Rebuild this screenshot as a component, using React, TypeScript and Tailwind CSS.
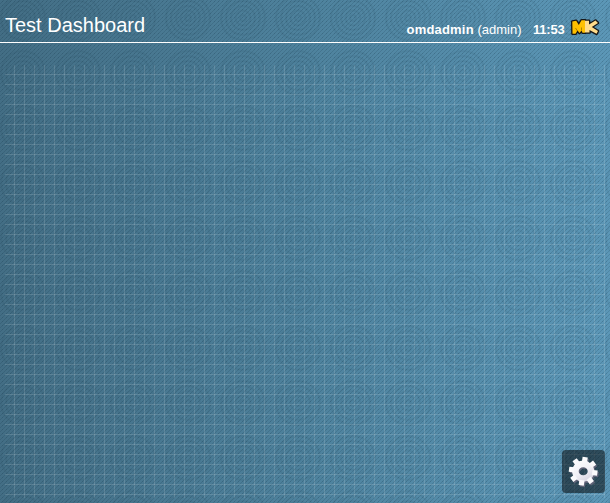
function Backdrop() {
  return (
    <svg className="absolute inset-0 -z-10" width="610" height="503" aria-hidden="true">
      <defs>
        <pattern id="hatch" width="4" height="4" patternUnits="userSpaceOnUse">
          <path d="M0 3h1v1H0zM1 2h1v1H1zM2 1h1v1H2zM3 0h1v1H3z" fill="#0c2c3d" opacity=".16" />
          <path d="M2 1h1v1H2z" fill="#0c2c3d" opacity=".12" />
        </pattern>
        <pattern id="rings" x="-4.500" y="-9.500" width="55" height="55" patternUnits="userSpaceOnUse">
          <g fill="none" stroke="#123546" strokeWidth="1.500" opacity=".13">
            <circle cx="27.500" cy="27.500" r="3" />
            <circle cx="27.500" cy="27.500" r="7.500" />
            <circle cx="27.500" cy="27.500" r="12" />
            <circle cx="27.500" cy="27.500" r="17" />
            <circle cx="27.500" cy="27.500" r="22" />
          </g>
        </pattern>
      </defs>
      <rect width="610" height="503" fill="url(#hatch)" />
      <rect width="610" height="503" fill="url(#rings)" />
    </svg>
  );
}

function Logo() {
  return (
    <svg className="ml-1.5 mt-[18px]" width="30" height="18" viewBox="0 0 30 18" strokeLinejoin="round" aria-label="MK">
      <g stroke="#171717" strokeWidth="2.600">
        <path d="M2.300 3.500L6.200 2.800L8.800 7L11.500 2.300H15V14.800H12.500L11.500 12.500L9.500 15L7.500 12.500L5.500 15.800H2.500Z" />
        <path d="M15 2.800H19V6.500L25.500 2.500L28 5L21.800 9L28 13L26.500 15.800L19.500 12V14.500H15Z" />
      </g>
      <path d="M2.300 3.500L6.200 2.800L8.800 7L11.500 2.300H15V14.800H12.500L11.500 12.500L9.500 15L7.500 12.500L5.500 15.800H2.500Z" fill="#ffc000" />
      <path d="M15 2.800H19V6.500L25.500 2.500L28 5L21.800 9L28 13L26.500 15.800L19.500 12V14.500H15Z" fill="#ffdc8c" />
      <path d="M5.500 10L7.500 13M11.500 9.500V12.500" stroke="#9b7100" strokeWidth=".8" />
    </svg>
  );
}

const TEETH = [0, 45, 90, 135, 180, 225, 270, 315];

function Gear() {
  return (
    <svg width="33" height="33" viewBox="-16.500 -16.500 33 33" aria-hidden="true">
      <defs>
        <linearGradient id="metal" gradientUnits="userSpaceOnUse" x1="-8" y1="-14" x2="8" y2="14">
          <stop offset="0" stopColor="#ffffff" />
          <stop offset=".5" stopColor="#f1f0f6" />
          <stop offset="1" stopColor="#c9c7d5" />
        </linearGradient>
        <g id="gear-body" fill="none" strokeLinejoin="round">
          <ellipse rx="7.800" ry="7.300" strokeWidth="6.600" />
          {TEETH.map((angle) => (
            <path key={angle} d="M0-9V-14.300" strokeWidth="5.200" transform={`rotate(${angle + 8})`} />
          ))}
        </g>
      </defs>
      <use href="#gear-body" x=".8" y="1.200" stroke="#716d83" opacity=".75" />
      <use href="#gear-body" x="-.3" y="-.3" stroke="url(#metal)" />
    </svg>
  );
}

export default function App() {
  return (
    <div className="relative isolate flex h-[503px] w-[610px] flex-col overflow-hidden bg-linear-to-r from-[#436e85] via-[#4e829d] to-[#5c97b7] font-['Liberation_Sans',Arial,sans-serif] text-white">
      <Backdrop />
      <header className="flex h-[43px] shrink-0 items-start border-b border-white pl-[5px] pr-2.5">
        <h1 className="mt-[13px] text-[20px] leading-6">Test Dashboard</h1>
        <div className="ml-auto mt-[22px] flex text-[13px] leading-4">
          <b className="w-[71px] tracking-[0.2px]">omdadmin</b>
          <span className="w-[55.500px]">(admin)</span>
          <b className="w-[31px] tracking-[-0.2px]">11:53</b>
        </div>
        <Logo />
      </header>
      <main className="mx-[5px] mt-[22px] h-[433px] bg-[linear-gradient(to_right,transparent_9px,#ffffff21_9px),linear-gradient(to_bottom,transparent_9px,#ffffff21_9px)] bg-[length:10px_10px]" />
      <button className="absolute bottom-[10px] right-[5px] flex size-[43px] items-center justify-center rounded-[4px] bg-black/50" aria-label="Dashboard settings">
        <Gear />
      </button>
    </div>
  );
}
